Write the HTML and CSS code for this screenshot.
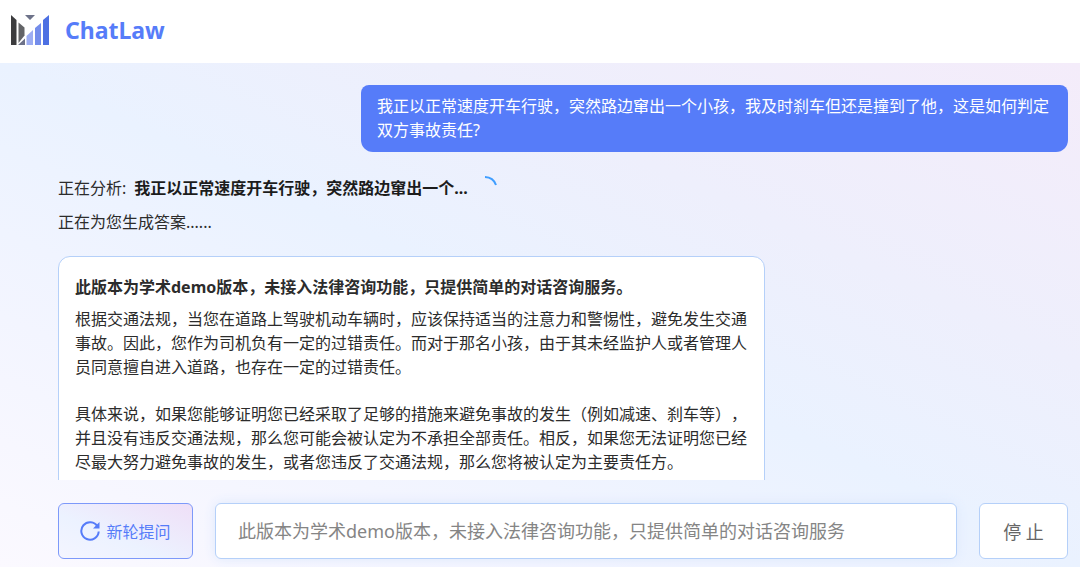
FILE: index.html
```html
<!DOCTYPE html>
<html lang="zh-CN">
  <head>
    <meta charset="UTF-8" />
    <meta name="viewport" content="width=device-width, initial-scale=1.0" />
    <title>ChatLaw</title>
    <link rel="stylesheet" href="styles.css">
  </head>
  <body>
    <header class="header">
      <svg class="logo" viewBox="0 0 38 30" aria-hidden="true">
        <path fill="#3c3c3e" d="M0 0l5.5 5v25H0z" />
        <path fill="#636467" d="M7.5 7.5l6 5v8l-6 7.500z" />
        <path fill="#6d7289" d="M14 0h10l-5 5zM7 30l7-6.500v6.500z" />
        <path fill="#9dadf2" d="M15.500 21l6.500-6v15h-6.500z" />
        <path fill="#748deb" d="M24 13l6-5v22h-6z" />
        <path fill="#4d70e3" d="M32 5l6-5v30h-6z" />
      </svg>
      <h1>ChatLaw</h1>
    </header>

    <main class="chat">
      <div class="messages">
        <div class="question">
          我正以正常速度开车行驶，突然路边窜出一个小孩，我及时刹车但还是撞到了他，这是如何判定双方事故责任?
        </div>

        <div class="status">
          <span>正在分析:</span>
          <strong>我正以正常速度开车行驶，突然路边窜出一个...</strong>
          <svg class="spinner" viewBox="0 0 26 26" aria-hidden="true">
            <path d="M13 1a12 12 0 0 1 11 8" />
          </svg>
        </div>
        <div class="status">正在为您生成答案......</div>

        <div class="answer">
          <h2>此版本为学术demo版本，未接入法律咨询功能，只提供简单的对话咨询服务。</h2>
          <p>根据交通法规，当您在道路上驾驶机动车辆时，应该保持适当的注意力和警惕性，避免发生交通事故。因此，您作为司机负有一定的过错责任。而对于那名小孩，由于其未经监护人或者管理人员同意擅自进入道路，也存在一定的过错责任。</p>
          <p>具体来说，如果您能够证明您已经采取了足够的措施来避免事故的发生（例如减速、刹车等），并且没有违反交通法规，那么您可能会被认定为不承担全部责任。相反，如果您无法证明您已经尽最大努力避免事故的发生，或者您违反了交通法规，那么您将被认定为主要责任方。</p>
        </div>
      </div>

      <form class="composer">
        <button type="button" class="new-round">
          <svg viewBox="0 0 20 20" aria-hidden="true">
            <path d="M17.500 5.500A8.700 8.700 0 1 0 18.700 10.500" />
            <path class="tip" d="M19.500 1v6.500H13z" />
          </svg>
          新轮提问
        </button>
        <input
          type="text"
          aria-label="提问"
          placeholder="此版本为学术demo版本，未接入法律咨询功能，只提供简单的对话咨询服务"
        />
        <button type="button" class="stop">停 止</button>
      </form>
    </main>
  </body>
</html>
```
FILE: styles.css
```css
* {
  box-sizing: border-box;
}
body {
  margin: 0;
  height: 100vh;
  display: flex;
  flex-direction: column;
  font-family: "Noto Sans", "Noto Sans CJK SC", sans-serif;
  font-size: 16px;
  line-height: 24px;
  text-spacing-trim: space-all;
  color: #2c2c2c;
}
.header {
  display: flex;
  align-items: center;
  gap: 16px;
  height: 63px;
  padding: 0 11px 4px;
  background: #fff;
}
.logo {
  width: 38px;
  height: 30px;
}
.header h1 {
  margin: 0;
  font-size: 23px;
  color: #567cf9;
}
.chat {
  flex: 1;
  min-height: 0;
  display: flex;
  flex-direction: column;
  padding: 22px 12px 8px 58px;
  background: linear-gradient(to bottom left, #f4ecfa, #eeeffc 30%, #eaf2ff 50%, #f3f5ff 75%, #fbf9ff);
}
.messages {
  flex: 1;
  min-height: 0;
  overflow: hidden;
}
.question {
  width: 70%;
  margin: 0 0 24px auto;
  padding: 9px 16px 10px;
  border-radius: 8px 8px 12px 12px;
  background: #567cf9;
  color: #fff;
}
.status {
  display: flex;
  height: 24px;
  margin-bottom: 10px;
}
.status strong {
  margin-left: 8px;
  color: #1c1c1c;
}
.spinner {
  width: 26px;
  height: 26px;
  margin-left: 4px;
  fill: none;
  stroke: #409eff;
  stroke-width: 2;
}
.answer {
  width: 70%;
  margin-top: 22px;
  padding: 18px 16px;
  border: 1px solid #b5d0f9;
  border-radius: 12px;
  background: #fff;
}
.answer h2 {
  margin: 0 0 8px;
  font-size: 16px;
}
.answer p {
  margin: 0 0 23px;
}
.composer {
  display: flex;
  gap: 22px;
  margin-top: 23px;
}
.composer button,
.composer input {
  height: 56px;
  border: 1px solid #b5d0f9;
  border-radius: 6px;
  background: #fff;
  font-family: inherit;
  font-size: 18px;
}
.composer input {
  flex: 1;
  min-width: 0;
  padding: 0 22px;
  box-shadow: 0 0 12px #dde8fb;
}
.composer input::placeholder {
  color: #858585;
}
.composer .new-round {
  width: 135px;
  display: flex;
  align-items: center;
  justify-content: center;
  gap: 6px;
  border-color: #7d99fa;
  background: linear-gradient(to bottom left, #efdff7, #ecf2ff 60%, #f4f5ff);
  color: #567cf9;
  font-size: 16px;
}
.new-round svg {
  width: 20px;
  height: 20px;
  fill: none;
  stroke: currentColor;
  stroke-width: 2;
}
.new-round .tip {
  fill: currentColor;
  stroke: none;
}
.composer .stop {
  width: 89px;
  color: #666;
}
```
